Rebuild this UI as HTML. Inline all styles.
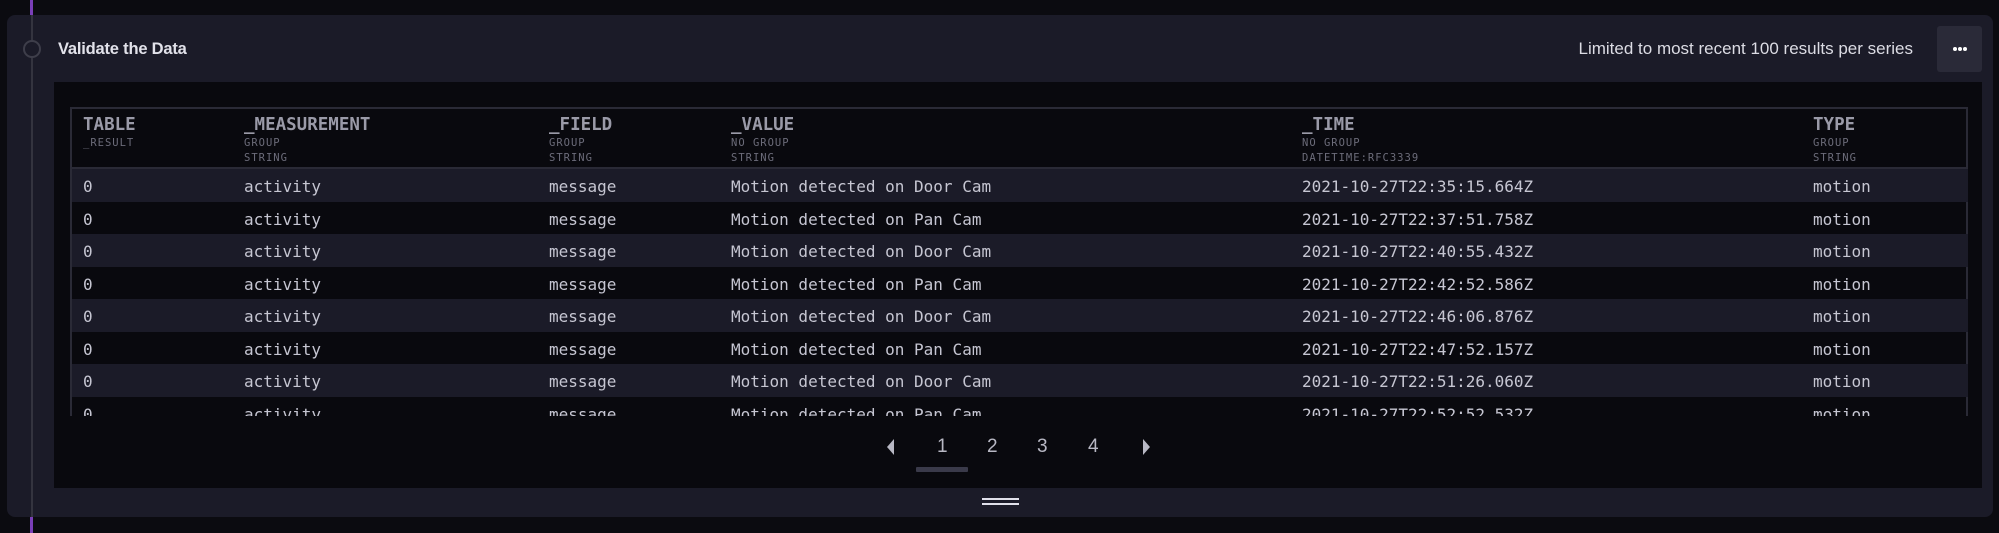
<!DOCTYPE html>
<html><head><meta charset="utf-8"><style>
*{margin:0;padding:0;box-sizing:border-box}
body{width:1999px;height:533px;background:#0b0b10;position:relative;overflow:hidden;font-family:"Liberation Sans",sans-serif}
.abs{position:absolute}
.mono{font-family:"DejaVu Sans Mono","Liberation Mono",monospace}
.row{position:absolute;left:70px;width:1898px;height:32.5px}
.cell{position:absolute;top:2px;line-height:32.5px;font-size:16px;color:#c6c6d2;white-space:nowrap}
.h{position:absolute;top:8px;font-size:17.5px;font-weight:bold;color:#9a9aa8;line-height:20px}
.s{display:block;font-size:10.5px;font-weight:normal;color:#6c6c7a;line-height:15px;letter-spacing:1px}
.s1{margin-top:1px}
.pg{position:absolute;top:436px;font-size:19px;color:#b8b8c4;line-height:22px}
</style></head><body>
<div class="abs" style="left:30px;top:0;width:3px;height:15px;background:#7a3fb8"></div>
<div class="abs" style="left:30px;top:517px;width:3px;height:16px;background:#7a3fb8"></div>
<div class="abs" style="left:7px;top:15px;width:1986px;height:502px;background:#1b1b28;border-radius:8px"></div>
<div class="abs" style="left:31px;top:15px;width:2px;height:502px;background:#34343f"></div>
<div class="abs" style="left:23px;top:40px;width:18px;height:18px;border:2px solid #3e3e4a;border-radius:50%;background:#1b1b28"></div>
<div class="abs" style="left:58px;top:39px;font-size:16.5px;font-weight:bold;color:#e2e2ea;line-height:20px;letter-spacing:-0.2px">Validate the Data</div>
<div class="abs" style="left:1400px;width:513px;text-align:right;top:39px;font-size:17px;color:#dcdce4;line-height:20px">Limited to most recent 100 results per series</div>
<div class="abs" style="left:1937px;top:26px;width:45px;height:46px;background:#2a2a38;border-radius:3px"></div>
<div class="abs" style="left:1953px;top:47px;width:4px;height:4px;border-radius:50%;background:#fff"></div>
<div class="abs" style="left:1958px;top:47px;width:4px;height:4px;border-radius:50%;background:#fff"></div>
<div class="abs" style="left:1963px;top:47px;width:4px;height:4px;border-radius:50%;background:#fff"></div>
<div class="abs" style="left:54px;top:82px;width:1928px;height:406px;background:#09090e"></div>
<div class="abs" style="left:70px;top:107px;width:1898px;height:309px;border:2px solid #2a2a36;border-bottom:none;overflow:hidden">
</div>
<div class="abs" style="left:70px;top:107px;width:1898px;height:309px;overflow:hidden">
 <div class="mono" style="position:absolute;left:0;top:0;width:1898px;height:62px;border-bottom:2px solid #2a2a36">
  <div class="h" style="left:13px">TABLE<span class="s s1">_RESULT</span></div>
  <div class="h" style="left:174px">_MEASUREMENT<span class="s s1">GROUP</span><span class="s">STRING</span></div>
  <div class="h" style="left:479px">_FIELD<span class="s s1">GROUP</span><span class="s">STRING</span></div>
  <div class="h" style="left:661px">_VALUE<span class="s s1">NO GROUP</span><span class="s">STRING</span></div>
  <div class="h" style="left:1232px">_TIME<span class="s s1">NO GROUP</span><span class="s">DATETIME:RFC3339</span></div>
  <div class="h" style="left:1743px">TYPE<span class="s s1">GROUP</span><span class="s">STRING</span></div>
 </div>
</div>
<div class="abs mono" style="left:0;top:169px;width:1999px;height:247px;overflow:hidden">
<div class="row" style="top:0;background:#1b1b28"><span class="cell" style="left:13px">0</span><span class="cell" style="left:174px">activity</span><span class="cell" style="left:479px">message</span><span class="cell" style="left:661px">Motion detected on Door Cam</span><span class="cell" style="left:1232px">2021-10-27T22:35:15.664Z</span><span class="cell" style="left:1743px">motion</span></div>
<div class="row" style="top:32.5px"><span class="cell" style="left:13px">0</span><span class="cell" style="left:174px">activity</span><span class="cell" style="left:479px">message</span><span class="cell" style="left:661px">Motion detected on Pan Cam</span><span class="cell" style="left:1232px">2021-10-27T22:37:51.758Z</span><span class="cell" style="left:1743px">motion</span></div>
<div class="row" style="top:65px;background:#1b1b28"><span class="cell" style="left:13px">0</span><span class="cell" style="left:174px">activity</span><span class="cell" style="left:479px">message</span><span class="cell" style="left:661px">Motion detected on Door Cam</span><span class="cell" style="left:1232px">2021-10-27T22:40:55.432Z</span><span class="cell" style="left:1743px">motion</span></div>
<div class="row" style="top:97.5px"><span class="cell" style="left:13px">0</span><span class="cell" style="left:174px">activity</span><span class="cell" style="left:479px">message</span><span class="cell" style="left:661px">Motion detected on Pan Cam</span><span class="cell" style="left:1232px">2021-10-27T22:42:52.586Z</span><span class="cell" style="left:1743px">motion</span></div>
<div class="row" style="top:130px;background:#1b1b28"><span class="cell" style="left:13px">0</span><span class="cell" style="left:174px">activity</span><span class="cell" style="left:479px">message</span><span class="cell" style="left:661px">Motion detected on Door Cam</span><span class="cell" style="left:1232px">2021-10-27T22:46:06.876Z</span><span class="cell" style="left:1743px">motion</span></div>
<div class="row" style="top:162.5px"><span class="cell" style="left:13px">0</span><span class="cell" style="left:174px">activity</span><span class="cell" style="left:479px">message</span><span class="cell" style="left:661px">Motion detected on Pan Cam</span><span class="cell" style="left:1232px">2021-10-27T22:47:52.157Z</span><span class="cell" style="left:1743px">motion</span></div>
<div class="row" style="top:195px;background:#1b1b28"><span class="cell" style="left:13px">0</span><span class="cell" style="left:174px">activity</span><span class="cell" style="left:479px">message</span><span class="cell" style="left:661px">Motion detected on Door Cam</span><span class="cell" style="left:1232px">2021-10-27T22:51:26.060Z</span><span class="cell" style="left:1743px">motion</span></div>
<div class="row" style="top:227.5px"><span class="cell" style="left:13px">0</span><span class="cell" style="left:174px">activity</span><span class="cell" style="left:479px">message</span><span class="cell" style="left:661px">Motion detected on Pan Cam</span><span class="cell" style="left:1232px">2021-10-27T22:52:52.532Z</span><span class="cell" style="left:1743px">motion</span></div>
<div class="abs" style="left:70px;top:0;width:2px;height:247px;background:#2a2a36"></div>
</div>
<svg class="abs" style="left:885px;top:438px" width="12" height="18"><path d="M9 1 L2 9 L9 17 Z" fill="#b8b8c4"/></svg>
<div class="pg" style="left:937px">1</div>
<div class="pg" style="left:987px">2</div>
<div class="pg" style="left:1037px">3</div>
<div class="pg" style="left:1088px">4</div>
<svg class="abs" style="left:1140px;top:438px" width="12" height="18"><path d="M3 1 L10 9 L3 17 Z" fill="#b8b8c4"/></svg>
<div class="abs" style="left:916px;top:467px;width:52px;height:5px;background:#3a3a4a;border-radius:1px"></div>
<div class="abs" style="left:982px;top:498px;width:37px;height:2px;background:#e0e0ea"></div>
<div class="abs" style="left:982px;top:503px;width:37px;height:2px;background:#e0e0ea"></div>
</body></html>
